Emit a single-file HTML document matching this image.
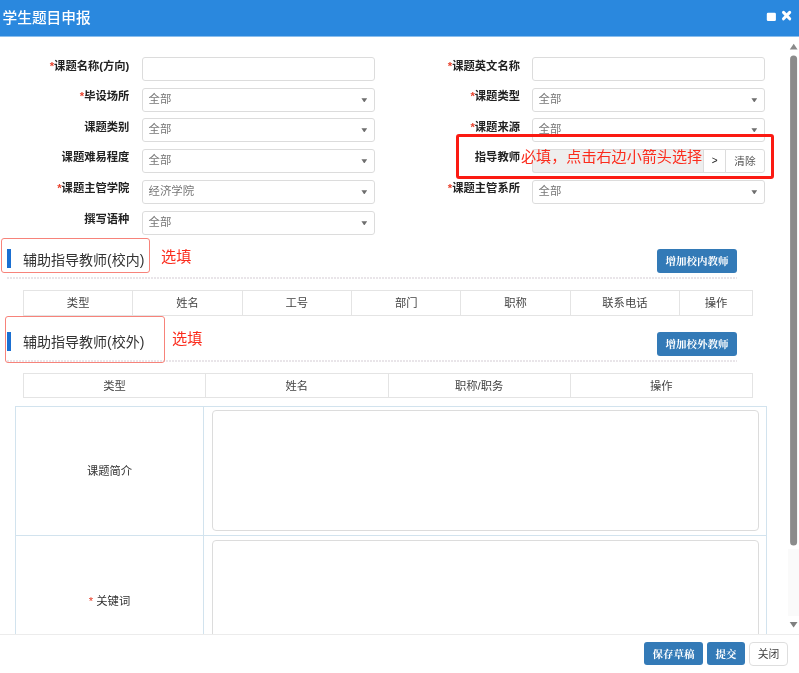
<!DOCTYPE html>
<html lang="zh-CN">
<head>
<meta charset="utf-8">
<title>学生题目申报</title>
<style>
*{box-sizing:border-box;margin:0;padding:0}
html,body{width:799px;height:673px;overflow:hidden;background:#fff}
body{position:relative;font-family:"Liberation Sans","Noto Sans CJK SC",sans-serif;font-size:12px;color:#333}
.abs{position:absolute}
body>*{will-change:transform}
#hdr{position:absolute;left:0;top:0;width:799px;height:36px;background:#2a88de;color:#fff;box-shadow:0 1px 0 rgba(42,136,222,.55);z-index:5}
#hdr .t{position:absolute;left:2.5px;top:7px;font-size:14.7px;line-height:22px;white-space:nowrap;font-weight:500}
.lbl{position:absolute;font-weight:bold;font-size:11.3px;line-height:16px;text-align:right;white-space:nowrap;color:#222}
.lbl i{font-style:normal;color:#e8432e;font-weight:bold}
.inp{position:absolute;height:24px;border:1px solid #dcdcdc;border-radius:3px;background:#fff;font-size:11.4px;line-height:21px;color:#777;padding-left:5.5px;white-space:nowrap}
.inp b{position:absolute;right:6.8px;top:9.3px;width:5.8px;height:4.2px;background:#6e6e6e;clip-path:polygon(0 0,100% 0,50% 100%)}
.sec{position:absolute;font-size:14px;line-height:20px;color:#333;white-space:nowrap}
.bar{position:absolute;width:4px;background:#1b6fd1}
.rbox{position:absolute;border:1px solid #f7837a;border-radius:3px}
.red{position:absolute;color:#fb2c1d;font-size:15.2px;line-height:20px;white-space:nowrap}
.dot{position:absolute;height:1.5px;background:repeating-linear-gradient(90deg,#e9e5e9 0 2.1px,transparent 2.1px 3px)}
.pbtn{position:absolute;background:#337ab7;color:#fff;border-radius:3px;font-family:"Liberation Serif","Noto Serif CJK SC",serif;font-weight:bold;font-size:10.5px;text-align:center;white-space:nowrap;padding-top:1px}
table.g{position:absolute;border-collapse:collapse;table-layout:fixed}
table.g td{border:1px solid #e4e4e4;text-align:center;font-size:11.3px;color:#444;height:25px;padding:0 0 1px 0;line-height:16px}
#big{position:absolute;left:15px;top:406px;width:752px;height:240px;border:1px solid #d2e3ee;border-bottom:none}
#big .v{position:absolute;left:187px;top:0;width:1px;height:240px;background:#d2e3ee}
#big .h{position:absolute;left:0;top:128px;width:750px;height:1px;background:#d2e3ee}
.ta{position:absolute;left:195.5px;width:547.5px;border:1px solid #dcdcdc;border-radius:4px;background:#fff}
.cl{position:absolute;font-size:11.3px;line-height:16px;color:#333;white-space:nowrap;text-align:center}
#ftr{position:absolute;left:0;top:634px;width:799px;height:39px;background:#fff;border-top:1px solid #ececec}
#sb{position:absolute;left:788px;top:36px;width:11px;height:598px;background:#fff}
</style>
</head>
<body>
<div id="hdr"><div class="t">学生题目申报</div>
<svg class="abs" style="left:766px;top:9px" width="30" height="16" viewBox="0 0 30 16"><rect x="0.8" y="3.8" width="9.1" height="8.3" rx="1.3" fill="#fff"/><path d="M17.5 3.4 L23.7 9.8 M23.7 3.4 L17.5 9.8" stroke="#fff" stroke-width="3" stroke-linecap="round"/></svg>
</div>

<!-- left column -->
<div class="lbl" style="left:0;width:129.4px;top:57.6px"><i>*</i>课题名称(方向)</div>
<div class="lbl" style="left:0;width:129.4px;top:88.3px"><i>*</i>毕设场所</div>
<div class="lbl" style="left:0;width:129.4px;top:118.6px">课题类别</div>
<div class="lbl" style="left:0;width:129.4px;top:149.3px">课题难易程度</div>
<div class="lbl" style="left:0;width:129.4px;top:180.3px"><i>*</i>课题主管学院</div>
<div class="lbl" style="left:0;width:129.4px;top:211.1px">撰写语种</div>

<div class="inp" style="left:142px;width:233px;top:57px"></div>
<div class="inp" style="left:142px;width:233px;top:88px">全部<b></b></div>
<div class="inp" style="left:142px;width:233px;top:118.4px">全部<b></b></div>
<div class="inp" style="left:142px;width:233px;top:149px">全部<b></b></div>
<div class="inp" style="left:142px;width:233px;top:180px">经济学院<b></b></div>
<div class="inp" style="left:142px;width:233px;top:211px">全部<b></b></div>

<!-- right column -->
<div class="lbl" style="left:390px;width:130px;top:57.6px"><i>*</i>课题英文名称</div>
<div class="lbl" style="left:390px;width:130px;top:88.3px"><i>*</i>课题类型</div>
<div class="lbl" style="left:390px;width:130px;top:118.6px"><i>*</i>课题来源</div>
<div class="lbl" style="left:390px;width:130px;top:180.3px"><i>*</i>课题主管系所</div>

<div class="inp" style="left:532px;width:233px;top:57px"></div>
<div class="inp" style="left:532px;width:233px;top:88px">全部<b></b></div>
<div class="inp" style="left:532px;width:233px;top:118.4px">全部<b></b></div>
<div class="inp" style="left:532px;width:233px;top:180px">全部<b></b></div>

<!-- red highlighted row -->
<div class="abs" style="left:456px;top:134px;width:318px;height:45px;border:3px solid #fb1a12;border-radius:3px"></div>
<div class="lbl" style="left:390px;width:130px;top:149.3px">指导教师</div>
<div class="abs" style="left:532px;top:149px;width:170.5px;height:24px;background:#eee;border:1px solid #dcdcdc;border-right:none;border-radius:3px 0 0 3px"></div>
<div class="abs" style="left:702.5px;top:149px;width:23.5px;height:24px;background:#fff;border:1px solid #dcdcdc;text-align:center;line-height:22.4px;font-size:10px;color:#222">&gt;</div>
<div class="abs" style="left:725px;top:149px;width:40px;height:24px;background:#fff;border:1px solid #dcdcdc;border-radius:0 3px 3px 0;text-align:center;line-height:23.2px;font-size:10.7px;color:#555">清除</div>
<div class="red" style="left:520.8px;top:147px;font-size:15.1px">必填，点击右边小箭头选择</div>

<!-- section 1 -->
<div class="dot" style="left:7px;top:277px;width:730px"></div>
<div class="rbox" style="left:1px;top:238px;width:149px;height:35px"></div>
<div class="bar" style="left:7px;top:249px;height:19px"></div>
<div class="sec" style="left:22.5px;top:250px">辅助指导教师(校内)</div>
<div class="red" style="left:160.5px;top:247px">选填</div>
<div class="pbtn" style="left:657px;top:249px;width:80px;height:24px;line-height:23.4px">增加校内教师</div>

<table class="g" style="left:23px;top:290px;width:730px"><colgroup><col style="width:15%"><col style="width:15%"><col style="width:15%"><col style="width:15%"><col style="width:15%"><col style="width:15%"><col style="width:10%"></colgroup><tr><td>类型</td><td>姓名</td><td>工号</td><td>部门</td><td>职称</td><td>联系电话</td><td>操作</td></tr></table>

<!-- section 2 -->
<div class="dot" style="left:7px;top:359.5px;width:730px"></div>
<div class="rbox" style="left:5px;top:316px;width:160px;height:47px"></div>
<div class="bar" style="left:7px;top:332px;height:19px"></div>
<div class="sec" style="left:22.5px;top:332px">辅助指导教师(校外)</div>
<div class="red" style="left:171.5px;top:329px">选填</div>
<div class="pbtn" style="left:657px;top:332px;width:80px;height:24px;line-height:23.4px">增加校外教师</div>

<table class="g" style="left:23px;top:373px;width:730px"><tr><td style="height:24px;padding:0">类型</td><td style="height:24px;padding:0">姓名</td><td style="height:24px;padding:0">职称/职务</td><td style="height:24px;padding:0">操作</td></tr></table>

<!-- big table -->
<div id="big"><div class="v"></div><div class="h"></div>
<div class="ta" style="top:3px;height:121px"></div>
<div class="ta" style="top:133px;height:121px"></div>
<div class="cl" style="left:0;width:187px;top:55.5px">课题简介</div>
<div class="cl" style="left:0;width:187px;top:186px"><span style="color:#e8432e">*</span> 关键词</div>
</div>

<!-- scrollbar -->
<div id="sb">
<svg class="abs" style="left:0;top:0" width="11" height="598" viewBox="0 0 11 598"><rect x="0" y="513" width="11" height="67" fill="#fafafa"/><path d="M1.8 13.5 L5.7 7.7 L9.6 13.5 Z" fill="#8a8a8a"/><rect x="2.1" y="19.6" width="7" height="490" rx="3.5" fill="#8b8b8b"/><path d="M1.7 586 L9.5 586 L5.6 591.5 Z" fill="#808080"/></svg>
</div>

<!-- footer -->
<div id="ftr"></div>
<div class="pbtn" style="left:644px;top:642.2px;width:59px;height:23.4px;line-height:23.4px">保存草稿</div>
<div class="pbtn" style="left:707px;top:642.2px;width:38px;height:23.4px;line-height:23.4px">提交</div>
<div class="abs" style="left:749px;top:642px;width:39px;height:24px;line-height:23.4px;border:1px solid #dedede;border-radius:4px;background:#fff;font-size:10.8px;text-align:center;color:#444">关闭</div>
</body>
</html>
